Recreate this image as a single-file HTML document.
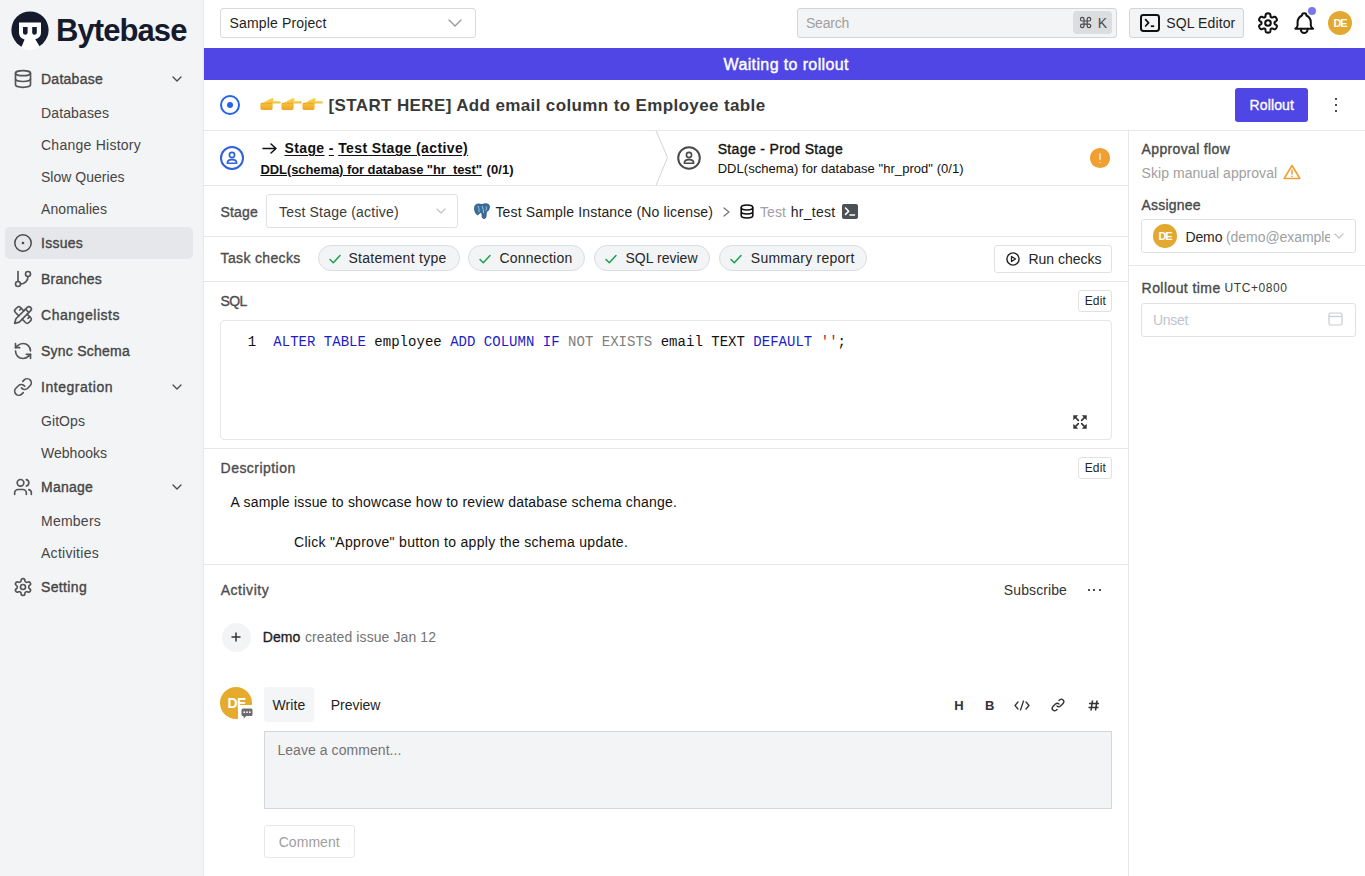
<!DOCTYPE html>
<html><head><meta charset="utf-8">
<style>
*{box-sizing:border-box;margin:0;padding:0}
html,body{width:1365px;height:876px;overflow:hidden;background:#fff}
body{font-family:"Liberation Sans",sans-serif;font-size:14px;color:#1f2937;position:relative}
.a{position:absolute;white-space:nowrap}
svg{display:block;overflow:visible}
</style></head>
<body>
<div class="a" style="left:0px;top:0px;width:204px;height:876px;background:#f3f4f6;border-right:1px solid #e5e7eb"></div>
<svg class="a" style="left:8px;top:8px;" width="44" height="44" viewBox="8 8 44 44"><circle cx="30" cy="30" r="18.6" fill="#151a2d"/>
<path d="M19 22.6H41V32.5Q41 37.6 35.3 39.3L40 47Q30.5 53 21.1 47.8L24.6 39.6Q19 37.8 19 32.5Z" fill="#fff"/>
<path d="M23 27H27.6V32.6Q27.6 34.8 25.3 34.8Q23 34.8 23 32.6Z" fill="#151a2d"/>
<path d="M32.2 27H36.8V32.6Q36.8 34.8 34.5 34.8Q32.2 34.8 32.2 32.6Z" fill="#151a2d"/></svg>
<div class="a" style="left:56.00px;top:14.76px;font-size:31px;line-height:31px;color:#151a2d;font-weight:bold;letter-spacing:-0.916px;">Bytebase</div>
<svg class="a" style="left:13px;top:69px;" width="20" height="20" viewBox="0 0 24 24"><g fill="none" stroke="#555" stroke-width="2" stroke-linecap="round" stroke-linejoin="round"><ellipse cx="12" cy="5" rx="9" ry="3"/><path d="M3 5V19A9 3 0 0 0 21 19V5"/><path d="M3 12A9 3 0 0 0 21 12"/></g></svg>
<div class="a" style="left:41.00px;top:72.15px;font-size:14px;line-height:14px;color:#454545;-webkit-text-stroke:0.35px #454545;letter-spacing:0.262px;">Database</div>
<svg class="a" style="left:172px;top:76px;" width="10" height="6" viewBox="0 0 10 6"><path d="M1 1l4 4 4-4" fill="none" stroke="#4a4a4a" stroke-width="1.3" stroke-linecap="round" stroke-linejoin="round"/></svg>
<div class="a" style="left:41.00px;top:106.15px;font-size:14px;line-height:14px;color:#454545;letter-spacing:0.122px;">Databases</div>
<div class="a" style="left:41.00px;top:138.15px;font-size:14px;line-height:14px;color:#454545;letter-spacing:0.253px;">Change History</div>
<div class="a" style="left:41.00px;top:170.15px;font-size:14px;line-height:14px;color:#454545;letter-spacing:0.022px;">Slow Queries</div>
<div class="a" style="left:41.00px;top:202.15px;font-size:14px;line-height:14px;color:#454545;letter-spacing:0.073px;">Anomalies</div>
<div class="a" style="left:5px;top:227px;width:188px;height:32px;background:#e5e7eb;border-radius:5px"></div>
<svg class="a" style="left:14px;top:234px;" width="18" height="18" viewBox="0 0 18 18"><circle cx="9" cy="9" r="8.2" fill="none" stroke="#4a4a4a" stroke-width="1.5"/><circle cx="9" cy="9" r="1.3" fill="#4a4a4a"/></svg>
<div class="a" style="left:41.00px;top:236.15px;font-size:14px;line-height:14px;color:#454545;-webkit-text-stroke:0.35px #454545;letter-spacing:0.258px;">Issues</div>
<svg class="a" style="left:13px;top:269px;" width="20" height="20" viewBox="0 0 24 24"><g fill="none" stroke="#555" stroke-width="2" stroke-linecap="round" stroke-linejoin="round"><line x1="6" x2="6" y1="3" y2="15"/><circle cx="18" cy="6" r="3"/><circle cx="6" cy="18" r="3"/><path d="M18 9a9 9 0 0 1-9 9"/></g></svg>
<div class="a" style="left:41.00px;top:272.15px;font-size:14px;line-height:14px;color:#454545;-webkit-text-stroke:0.35px #454545;letter-spacing:0.234px;">Branches</div>
<svg class="a" style="left:13px;top:305px;" width="20" height="20" viewBox="0 0 24 24"><g fill="none" stroke="#555" stroke-width="2" stroke-linecap="round" stroke-linejoin="round"><path d="m15 5 4 4"/><path d="M13 7 8.7 2.7a2.41 2.41 0 0 0-3.4 0L2.7 5.3a2.41 2.41 0 0 0 0 3.4L7 13"/><path d="m8 6 2-2"/><path d="m2 22 5.5-1.5L21.17 6.83a2.82 2.82 0 0 0-4-4L3.5 16.5Z"/><path d="m18 16 2-2"/><path d="m17 11 4.3 4.3c.94.94.94 2.46 0 3.4l-2.6 2.6c-.94.94-2.46.94-3.4 0L11 17"/></g></svg>
<div class="a" style="left:41.00px;top:308.15px;font-size:14px;line-height:14px;color:#454545;-webkit-text-stroke:0.35px #454545;letter-spacing:0.534px;">Changelists</div>
<svg class="a" style="left:13px;top:341px;" width="20" height="20" viewBox="0 0 24 24"><g fill="none" stroke="#555" stroke-width="2" stroke-linecap="round" stroke-linejoin="round"><path d="M21 12a9 9 0 0 0-9-9 9.75 9.75 0 0 0-6.74 2.74L3 8"/><path d="M3 3v5h5"/><path d="M3 12a9 9 0 0 0 9 9 9.75 9.75 0 0 0 6.74-2.74L21 16"/><path d="M16 16h5v5"/></g></svg>
<div class="a" style="left:41.00px;top:344.15px;font-size:14px;line-height:14px;color:#454545;-webkit-text-stroke:0.35px #454545;letter-spacing:0.240px;">Sync Schema</div>
<svg class="a" style="left:13px;top:377px;" width="20" height="20" viewBox="0 0 24 24"><g fill="none" stroke="#555" stroke-width="2" stroke-linecap="round" stroke-linejoin="round"><path d="M10 13a5 5 0 0 0 7.54.54l3-3a5 5 0 0 0-7.07-7.07l-1.72 1.71"/><path d="M14 11a5 5 0 0 0-7.54-.54l-3 3a5 5 0 0 0 7.07 7.07l1.71-1.71"/></g></svg>
<div class="a" style="left:41.00px;top:380.15px;font-size:14px;line-height:14px;color:#454545;-webkit-text-stroke:0.35px #454545;letter-spacing:0.534px;">Integration</div>
<svg class="a" style="left:172px;top:384px;" width="10" height="6" viewBox="0 0 10 6"><path d="M1 1l4 4 4-4" fill="none" stroke="#4a4a4a" stroke-width="1.3" stroke-linecap="round" stroke-linejoin="round"/></svg>
<div class="a" style="left:41.00px;top:414.15px;font-size:14px;line-height:14px;color:#454545;letter-spacing:0.073px;">GitOps</div>
<div class="a" style="left:41.00px;top:446.15px;font-size:14px;line-height:14px;color:#454545;letter-spacing:0.016px;">Webhooks</div>
<svg class="a" style="left:13px;top:477px;" width="20" height="20" viewBox="0 0 24 24"><g fill="none" stroke="#555" stroke-width="2" stroke-linecap="round" stroke-linejoin="round"><path d="M16 21v-2a4 4 0 0 0-4-4H6a4 4 0 0 0-4 4v2"/><circle cx="9" cy="7" r="4"/><path d="M22 21v-2a4 4 0 0 0-3-3.87"/><path d="M16 3.13a4 4 0 0 1 0 7.75"/></g></svg>
<div class="a" style="left:41.00px;top:480.15px;font-size:14px;line-height:14px;color:#454545;-webkit-text-stroke:0.35px #454545;letter-spacing:0.240px;">Manage</div>
<svg class="a" style="left:172px;top:484px;" width="10" height="6" viewBox="0 0 10 6"><path d="M1 1l4 4 4-4" fill="none" stroke="#4a4a4a" stroke-width="1.3" stroke-linecap="round" stroke-linejoin="round"/></svg>
<div class="a" style="left:41.00px;top:514.15px;font-size:14px;line-height:14px;color:#454545;letter-spacing:0.241px;">Members</div>
<div class="a" style="left:41.00px;top:546.15px;font-size:14px;line-height:14px;color:#454545;letter-spacing:0.277px;">Activities</div>
<svg class="a" style="left:13px;top:577px;" width="20" height="20" viewBox="0 0 24 24"><g fill="none" stroke="#555" stroke-width="2" stroke-linecap="round" stroke-linejoin="round"><path d="M12.22 2h-.44a2 2 0 0 0-2 2v.18a2 2 0 0 1-1 1.73l-.43.25a2 2 0 0 1-2 0l-.15-.08a2 2 0 0 0-2.73.73l-.22.38a2 2 0 0 0 .73 2.73l.15.1a2 2 0 0 1 1 1.72v.51a2 2 0 0 1-1 1.74l-.15.09a2 2 0 0 0-.73 2.73l.22.38a2 2 0 0 0 2.73.73l.15-.08a2 2 0 0 1 2 0l.43.25a2 2 0 0 1 1 1.73V20a2 2 0 0 0 2 2h.44a2 2 0 0 0 2-2v-.18a2 2 0 0 1 1-1.73l.43-.25a2 2 0 0 1 2 0l.15.08a2 2 0 0 0 2.73-.73l.22-.39a2 2 0 0 0-.73-2.73l-.15-.08a2 2 0 0 1-1-1.74v-.5a2 2 0 0 1 1-1.74l.15-.09a2 2 0 0 0 .73-2.73l-.22-.38a2 2 0 0 0-2.73-.73l-.15.08a2 2 0 0 1-2 0l-.43-.25a2 2 0 0 1-1-1.73V4a2 2 0 0 0-2-2z"/><circle cx="12" cy="12" r="3"/></g></svg>
<div class="a" style="left:41.00px;top:580.15px;font-size:14px;line-height:14px;color:#454545;-webkit-text-stroke:0.35px #454545;letter-spacing:0.346px;">Setting</div>
<div class="a" style="left:220px;top:8px;width:256px;height:30px;border:1px solid #d9d9d9;border-radius:3px;background:#fff"></div>
<div class="a" style="left:229.50px;top:15.85px;font-size:14px;line-height:14px;color:#1f1f1f;letter-spacing:0.150px;">Sample Project</div>
<svg class="a" style="left:448px;top:19px;" width="14" height="8" viewBox="0 0 14 8"><path d="M1 1l6 6 6-6" fill="none" stroke="#999" stroke-width="1.4" stroke-linecap="round" stroke-linejoin="round"/></svg>
<div class="a" style="left:797px;top:8px;width:320px;height:30px;border:1px solid #d4d4d8;border-radius:3px;background:#f3f4f6"></div>
<div class="a" style="left:806.00px;top:15.85px;font-size:14px;line-height:14px;color:#a0a0a0;letter-spacing:-0.224px;">Search</div>
<div class="a" style="left:1073px;top:11px;width:39px;height:23px;background:#dcdde0;border-radius:4px"></div>
<svg class="a" style="left:1080px;top:17px;" width="11.2" height="11.2" viewBox="0 0 12 12"><path d="M4.3 4.3V2.4A1.9 1.9 0 1 0 2.4 4.3H9.6A1.9 1.9 0 1 0 7.7 2.4V9.6A1.9 1.9 0 1 0 9.6 7.7H2.4A1.9 1.9 0 1 0 4.3 9.6Z" fill="none" stroke="#4b4b4b" stroke-width="1.3" stroke-linejoin="round"/></svg>
<div class="a" style="left:1097.80px;top:15.95px;font-size:14px;line-height:14px;color:#4b4b4b;">K</div>
<div class="a" style="left:1129px;top:8px;width:115px;height:30px;border:1px solid #d4d4d8;border-radius:3px;background:#f3f4f6"></div>
<svg class="a" style="left:1140px;top:14px;" width="20" height="18" viewBox="0 0 20 18"><rect x="1" y="1" width="18" height="16" rx="2.4" fill="none" stroke="#111" stroke-width="2"/><path d="M5.6 5.6l3 3.2-3 3.2" fill="none" stroke="#111" stroke-width="1.7" stroke-linecap="round" stroke-linejoin="round"/><path d="M10.8 12.2h3.4" fill="none" stroke="#111" stroke-width="1.8" stroke-linecap="butt"/></svg>
<div class="a" style="left:1166.30px;top:15.95px;font-size:14px;line-height:14px;color:#1f1f1f;letter-spacing:0.105px;">SQL Editor</div>
<svg class="a" style="left:1255px;top:10px;" width="26" height="26" viewBox="0 0 24 24"><g fill="none" stroke="#111" stroke-width="1.9" stroke-linejoin="round"><path d="M18.02 12.00 L18.03 12.16 L18.04 12.32 L18.08 12.48 L18.14 12.65 L18.25 12.82 L18.42 13.02 L18.70 13.24 L19.06 13.50 L19.47 13.79 L19.83 14.10 L20.07 14.39 L20.20 14.67 L20.25 14.92 L20.23 15.16 L20.18 15.39 L20.11 15.61 L20.02 15.83 L19.93 16.04 L19.82 16.25 L19.71 16.45 L19.59 16.65 L19.46 16.84 L19.33 17.03 L19.18 17.22 L19.03 17.39 L18.85 17.55 L18.65 17.68 L18.41 17.77 L18.11 17.80 L17.73 17.73 L17.29 17.57 L16.83 17.37 L16.42 17.18 L16.09 17.06 L15.84 17.00 L15.63 16.99 L15.45 17.02 L15.30 17.08 L15.15 17.14 L15.01 17.22 L14.88 17.30 L14.75 17.39 L14.62 17.50 L14.51 17.64 L14.41 17.82 L14.33 18.07 L14.27 18.42 L14.23 18.87 L14.18 19.36 L14.10 19.83 L13.97 20.19 L13.79 20.44 L13.59 20.60 L13.38 20.71 L13.16 20.78 L12.93 20.83 L12.70 20.86 L12.47 20.88 L12.23 20.90 L12.00 20.90 L11.77 20.90 L11.53 20.88 L11.30 20.86 L11.07 20.83 L10.84 20.78 L10.62 20.71 L10.41 20.60 L10.21 20.44 L10.03 20.19 L9.90 19.83 L9.82 19.36 L9.77 18.87 L9.73 18.42 L9.67 18.07 L9.59 17.82 L9.49 17.64 L9.38 17.50 L9.25 17.39 L9.12 17.30 L8.99 17.22 L8.85 17.14 L8.70 17.08 L8.55 17.02 L8.37 16.99 L8.16 17.00 L7.91 17.06 L7.58 17.18 L7.17 17.37 L6.71 17.57 L6.27 17.73 L5.89 17.80 L5.59 17.77 L5.35 17.68 L5.15 17.55 L4.97 17.39 L4.82 17.22 L4.67 17.03 L4.54 16.84 L4.41 16.65 L4.29 16.45 L4.18 16.25 L4.07 16.04 L3.98 15.83 L3.89 15.61 L3.82 15.39 L3.77 15.16 L3.75 14.92 L3.80 14.67 L3.93 14.39 L4.17 14.10 L4.53 13.79 L4.94 13.50 L5.30 13.24 L5.58 13.02 L5.75 12.82 L5.86 12.65 L5.92 12.48 L5.96 12.32 L5.97 12.16 L5.98 12.00 L5.97 11.84 L5.96 11.68 L5.92 11.52 L5.86 11.35 L5.75 11.18 L5.58 10.98 L5.30 10.76 L4.94 10.50 L4.53 10.21 L4.17 9.90 L3.93 9.61 L3.80 9.33 L3.75 9.08 L3.77 8.84 L3.82 8.61 L3.89 8.39 L3.98 8.17 L4.07 7.96 L4.18 7.75 L4.29 7.55 L4.41 7.35 L4.54 7.16 L4.67 6.97 L4.82 6.78 L4.97 6.61 L5.15 6.45 L5.35 6.32 L5.59 6.23 L5.89 6.20 L6.27 6.27 L6.71 6.43 L7.17 6.63 L7.58 6.82 L7.91 6.94 L8.16 7.00 L8.37 7.01 L8.55 6.98 L8.70 6.92 L8.85 6.86 L8.99 6.78 L9.12 6.70 L9.25 6.61 L9.38 6.50 L9.49 6.36 L9.59 6.18 L9.67 5.93 L9.73 5.58 L9.77 5.13 L9.82 4.64 L9.90 4.17 L10.03 3.81 L10.21 3.56 L10.41 3.40 L10.62 3.29 L10.84 3.22 L11.07 3.17 L11.30 3.14 L11.53 3.12 L11.77 3.10 L12.00 3.10 L12.23 3.10 L12.47 3.12 L12.70 3.14 L12.93 3.17 L13.16 3.22 L13.38 3.29 L13.59 3.40 L13.79 3.56 L13.97 3.81 L14.10 4.17 L14.18 4.64 L14.23 5.13 L14.27 5.58 L14.33 5.93 L14.41 6.18 L14.51 6.36 L14.62 6.50 L14.75 6.61 L14.88 6.70 L15.01 6.78 L15.15 6.86 L15.30 6.92 L15.45 6.98 L15.63 7.01 L15.84 7.00 L16.09 6.94 L16.42 6.82 L16.83 6.63 L17.29 6.43 L17.73 6.27 L18.11 6.20 L18.41 6.23 L18.65 6.32 L18.85 6.45 L19.03 6.61 L19.18 6.78 L19.33 6.97 L19.46 7.16 L19.59 7.35 L19.71 7.55 L19.82 7.75 L19.93 7.96 L20.02 8.17 L20.11 8.39 L20.18 8.61 L20.23 8.84 L20.25 9.08 L20.20 9.33 L20.07 9.61 L19.83 9.90 L19.47 10.21 L19.06 10.50 L18.70 10.76 L18.42 10.98 L18.25 11.18 L18.14 11.35 L18.08 11.52 L18.04 11.68 L18.03 11.84Z"/><circle cx="12" cy="12" r="2.6"/></g></svg>
<svg class="a" style="left:1290.8px;top:9.8px;" width="26.4" height="26.4" viewBox="0 0 24 24"><g fill="none" stroke="#111" stroke-width="1.85" stroke-linecap="round" stroke-linejoin="round"><path d="M10 5a2 2 0 1 1 4 0a7 7 0 0 1 4 6v3a4 4 0 0 0 2 3h-16a4 4 0 0 0 2 -3v-3a7 7 0 0 1 4 -6"/><path d="M9 17v1a3 3 0 0 0 6 0v-1"/></g></svg>
<div class="a" style="left:1308px;top:7px;width:8px;height:8px;background:#7878e8;border-radius:50%"></div>
<div class="a" style="left:1328px;top:11px;width:24px;height:24px;background:#e3a82f;border-radius:50%"></div>
<div class="a" style="left:1333.50px;top:17.69px;font-size:11px;line-height:11px;color:#fff;font-weight:bold;letter-spacing:-1.141px;">DE</div>
<div class="a" style="left:204px;top:48px;width:1161px;height:32px;background:#4f46e5"></div>
<div class="a" style="left:723.50px;top:56.76px;font-size:16px;line-height:16px;color:#fff;-webkit-text-stroke:0.40px #fff;letter-spacing:0.378px;">Waiting to rollout</div>
<svg class="a" style="left:220px;top:95px;" width="20" height="20" viewBox="0 0 20 20"><circle cx="10" cy="10" r="9" fill="none" stroke="#2563eb" stroke-width="2"/><circle cx="10" cy="10" r="3" fill="#2563eb"/></svg>
<svg class="a" style="left:260px;top:97px;" width="21" height="14" viewBox="0 0 21 14"><defs><linearGradient id="hg" x1="0" y1="0" x2="0" y2="1"><stop offset="0" stop-color="#fdd54e"/><stop offset="1" stop-color="#eda526"/></linearGradient></defs><path d="M3.5 5.6L11.6 1.2Q13.2 0.6 13.6 2Q13.8 3 12.8 4.2H19.6Q20.8 4.3 20.8 5.4Q20.8 6.5 19.6 6.6H12.6V11.2Q12.6 13.1 10.6 13.1H2.4Q0.4 13.1 0.4 11.2V7.6Q0.4 5.8 3.5 5.6Z" fill="url(#hg)"/><path d="M0.8 6.6H4.6M6 6.4H12.2" stroke="#d38c1c" stroke-width="0.6" fill="none" opacity="0.7"/></svg>
<svg class="a" style="left:281px;top:97px;" width="21" height="14" viewBox="0 0 21 14"><defs><linearGradient id="hg" x1="0" y1="0" x2="0" y2="1"><stop offset="0" stop-color="#fdd54e"/><stop offset="1" stop-color="#eda526"/></linearGradient></defs><path d="M3.5 5.6L11.6 1.2Q13.2 0.6 13.6 2Q13.8 3 12.8 4.2H19.6Q20.8 4.3 20.8 5.4Q20.8 6.5 19.6 6.6H12.6V11.2Q12.6 13.1 10.6 13.1H2.4Q0.4 13.1 0.4 11.2V7.6Q0.4 5.8 3.5 5.6Z" fill="url(#hg)"/><path d="M0.8 6.6H4.6M6 6.4H12.2" stroke="#d38c1c" stroke-width="0.6" fill="none" opacity="0.7"/></svg>
<svg class="a" style="left:302px;top:97px;" width="21" height="14" viewBox="0 0 21 14"><defs><linearGradient id="hg" x1="0" y1="0" x2="0" y2="1"><stop offset="0" stop-color="#fdd54e"/><stop offset="1" stop-color="#eda526"/></linearGradient></defs><path d="M3.5 5.6L11.6 1.2Q13.2 0.6 13.6 2Q13.8 3 12.8 4.2H19.6Q20.8 4.3 20.8 5.4Q20.8 6.5 19.6 6.6H12.6V11.2Q12.6 13.1 10.6 13.1H2.4Q0.4 13.1 0.4 11.2V7.6Q0.4 5.8 3.5 5.6Z" fill="url(#hg)"/><path d="M0.8 6.6H4.6M6 6.4H12.2" stroke="#d38c1c" stroke-width="0.6" fill="none" opacity="0.7"/></svg>
<div class="a" style="left:328.50px;top:96.51px;font-size:17px;line-height:17px;color:#383838;font-weight:bold;letter-spacing:0.375px;">[START HERE] Add email column to Employee table</div>
<div class="a" style="left:1235px;top:88px;width:73px;height:34px;background:#4f46e5;border-radius:3px"></div>
<div class="a" style="left:1249.50px;top:97.95px;font-size:14px;line-height:14px;color:#fff;-webkit-text-stroke:0.35px #fff;letter-spacing:0.134px;">Rollout</div>
<div class="a" style="left:1334.7px;top:97.7px;width:2.6px;height:2.6px;background:#111;border-radius:50%"></div>
<div class="a" style="left:1334.7px;top:103.7px;width:2.6px;height:2.6px;background:#111;border-radius:50%"></div>
<div class="a" style="left:1334.7px;top:109.7px;width:2.6px;height:2.6px;background:#111;border-radius:50%"></div>
<div class="a" style="left:204px;top:130px;width:1161px;height:1px;background:#e5e7eb"></div>
<svg class="a" style="left:220px;top:146px;" width="24" height="24" viewBox="0 0 24 24"><circle cx="12" cy="12" r="11" fill="none" stroke="#2f62d6" stroke-width="2"/><circle cx="12" cy="9" r="2.6" fill="none" stroke="#2f62d6" stroke-width="1.6"/><path d="M7.3 17.2Q7.3 13.6 12 13.6Q16.7 13.6 16.7 17.2Z" fill="none" stroke="#2f62d6" stroke-width="1.6" stroke-linejoin="round"/></svg>
<svg class="a" style="left:262px;top:143px;" width="15" height="11" viewBox="0 0 15 11"><path d="M1 5.5h13M9 1l5 4.5-5 4.5" fill="none" stroke="#111" stroke-width="1.5" stroke-linecap="round" stroke-linejoin="round"/></svg>
<div class="a" style="left:284.50px;top:141.15px;font-size:14px;line-height:14px;color:#111;font-weight:bold;letter-spacing:0.383px;text-underline-offset:1.5px"><u>Stage</u> <u>-</u> <u>Test Stage (active)</u></div>
<div class="a" style="left:260.40px;top:162.70px;font-size:13px;line-height:13px;color:#111;font-weight:bold;letter-spacing:-0.074px;text-decoration:underline;text-underline-offset:1px">DDL(schema) for database "hr_test"</div>
<div class="a" style="left:486.60px;top:162.70px;font-size:13px;line-height:13px;color:#111;font-weight:bold;letter-spacing:0.053px;">(0/1)</div>
<svg class="a" style="left:654px;top:130px;" width="16" height="56" viewBox="0 0 16 56"><path d="M2 0.5L13.5 27.5L2 55.5" fill="none" stroke="#d4d4d8" stroke-width="1"/></svg>
<svg class="a" style="left:677px;top:146px;" width="24" height="24" viewBox="0 0 24 24"><circle cx="12" cy="12" r="10.8" fill="none" stroke="#4b4b4b" stroke-width="2"/><circle cx="12" cy="9" r="2.6" fill="none" stroke="#4b4b4b" stroke-width="1.6"/><path d="M7.3 17.2Q7.3 13.6 12 13.6Q16.7 13.6 16.7 17.2Z" fill="none" stroke="#4b4b4b" stroke-width="1.6" stroke-linejoin="round"/></svg>
<div class="a" style="left:717.70px;top:142.25px;font-size:14px;line-height:14px;color:#111;-webkit-text-stroke:0.35px #111;letter-spacing:0.347px;">Stage - Prod Stage</div>
<div class="a" style="left:717.70px;top:161.90px;font-size:13px;line-height:13px;color:#111;letter-spacing:0.047px;">DDL(schema) for database "hr_prod" (0/1)</div>
<div class="a" style="left:1090.3px;top:148.3px;width:19.5px;height:19.5px;background:#f0a032;border-radius:50%"></div>
<div class="a" style="left:1099.2px;top:152.6px;width:1.6px;height:7px;background:#fcd9a0;border-radius:1px"></div>
<div class="a" style="left:1099.2px;top:161.6px;width:1.6px;height:1.6px;background:#fcd9a0;border-radius:50%"></div>
<div class="a" style="left:204px;top:185px;width:924px;height:1px;background:#e5e7eb"></div>
<div class="a" style="left:1128px;top:131px;width:1px;height:745px;background:#e5e7eb"></div>
<div class="a" style="left:1141.60px;top:142.15px;font-size:14px;line-height:14px;color:#4a4a4a;-webkit-text-stroke:0.35px #4a4a4a;letter-spacing:0.345px;">Approval flow</div>
<div class="a" style="left:1141.60px;top:165.75px;font-size:14px;line-height:14px;color:#a0a0a0;letter-spacing:0.046px;">Skip manual approval</div>
<svg class="a" style="left:1283px;top:164px;" width="18" height="16" viewBox="0 0 18 16"><path d="M9 1.5L1.2 14.5H16.8Z" fill="none" stroke="#f0a032" stroke-width="1.6" stroke-linejoin="round"/><path d="M9 6v4" stroke="#f0a032" stroke-width="1.5" stroke-linecap="round"/><circle cx="9" cy="12.3" r="0.9" fill="#f0a032"/></svg>
<div class="a" style="left:1141.60px;top:198.15px;font-size:14px;line-height:14px;color:#4a4a4a;-webkit-text-stroke:0.35px #4a4a4a;letter-spacing:0.178px;">Assignee</div>
<div class="a" style="left:1141px;top:219px;width:215px;height:34px;border:1px solid #e0e0e6;border-radius:3px;background:#fff"></div>
<div class="a" style="left:1153.2px;top:224.2px;width:23.6px;height:23.6px;background:#e3a82f;border-radius:50%"></div>
<div class="a" style="left:1158.50px;top:230.69px;font-size:11px;line-height:11px;color:#fff;font-weight:bold;letter-spacing:-1.141px;">DE</div>
<div class="a" style="left:1185.40px;top:229.85px;font-size:14px;line-height:14px;color:#262626;letter-spacing:-0.082px;">Demo</div>
<div class="a" style="left:1226px;top:228px;width:104px;height:18px;overflow:hidden"><div class="a" style="left:0.00px;top:1.85px;font-size:14px;line-height:14px;color:#a0a0a0;letter-spacing:-0.058px;">(demo@example.com)</div>
</div>
<svg class="a" style="left:1334px;top:233px;" width="10" height="6" viewBox="0 0 10 6"><path d="M1 1l4 4 4-4" fill="none" stroke="#c0c4cc" stroke-width="1.2" stroke-linecap="round" stroke-linejoin="round"/></svg>
<div class="a" style="left:1128px;top:265px;width:237px;height:1px;background:#e5e7eb"></div>
<div class="a" style="left:1141.60px;top:280.65px;font-size:14px;line-height:14px;color:#4a4a4a;-webkit-text-stroke:0.35px #4a4a4a;letter-spacing:0.426px;">Rollout time</div>
<div class="a" style="left:1224.50px;top:282.34px;font-size:12px;line-height:12px;color:#3a3a3a;letter-spacing:0.578px;">UTC+0800</div>
<div class="a" style="left:1141px;top:303px;width:215px;height:34px;border:1px solid #e0e0e6;border-radius:3px;background:#fff"></div>
<div class="a" style="left:1153.00px;top:313.15px;font-size:14px;line-height:14px;color:#c0c4cc;letter-spacing:-0.312px;">Unset</div>
<svg class="a" style="left:1328px;top:312px;" width="15" height="14" viewBox="0 0 15 14"><rect x="1" y="1" width="13" height="12" rx="1.5" fill="none" stroke="#c8cbd0" stroke-width="1.2"/><path d="M1 4.5h13" stroke="#c8cbd0" stroke-width="1.2"/></svg>
<div class="a" style="left:220.60px;top:204.55px;font-size:14px;line-height:14px;color:#4d4d4d;-webkit-text-stroke:0.35px #4d4d4d;letter-spacing:0.124px;">Stage</div>
<div class="a" style="left:266px;top:194px;width:192px;height:34px;border:1px solid #e0e0e6;border-radius:3px;background:#fff"></div>
<div class="a" style="left:279.00px;top:205.35px;font-size:14px;line-height:14px;color:#3a3a3a;letter-spacing:0.200px;">Test Stage (active)</div>
<svg class="a" style="left:436px;top:208px;" width="10" height="6" viewBox="0 0 10 6"><path d="M1 1l4 4 4-4" fill="none" stroke="#c0c4cc" stroke-width="1.2" stroke-linecap="round" stroke-linejoin="round"/></svg>
<svg class="a" style="left:474px;top:203px;" width="16" height="16" viewBox="0 0 16 16"><path d="M2.2 1.4Q0.3 2.4 0.5 6Q0.8 9.6 2.8 11.4Q3.8 12.1 4.6 11.2L6.1 9.6Q7.1 9.9 8 9.9L8.1 13.8Q8.4 15.6 10.2 15.6Q12 15.4 12 13.5L12.3 9.1Q15.6 7.6 15.5 3.6Q15.3 1 12.6 0.8Q10.4 0.4 8 1.6Q5 0.4 2.2 1.4Z" fill="#3a6f9c" stroke="#2b4d6e" stroke-width="0.8"/><path d="M4 3Q5.5 5 5 9M8.2 3Q9.5 6 9.6 10M12 3.5Q13 5 12 7.5" stroke="#9cc8ec" stroke-width="0.9" fill="none"/></svg>
<div class="a" style="left:495.40px;top:205.15px;font-size:14px;line-height:14px;color:#1f1f1f;letter-spacing:0.159px;">Test Sample Instance (No license)</div>
<svg class="a" style="left:723px;top:207px;" width="7" height="10" viewBox="0 0 7 10"><path d="M1 1l5 4-5 4" fill="none" stroke="#777" stroke-width="1.3" stroke-linecap="round" stroke-linejoin="round"/></svg>
<svg class="a" style="left:740px;top:204px;" width="14" height="15" viewBox="0 0 14 15"><g fill="none" stroke="#111" stroke-width="1.6"><ellipse cx="7" cy="3.5" rx="5.8" ry="2.5"/><path d="M1.2 3.5v8c0 1.4 2.6 2.5 5.8 2.5s5.8-1.1 5.8-2.5v-8M1.2 7.5c0 1.4 2.6 2.5 5.8 2.5s5.8-1.1 5.8-2.5"/></g></svg>
<div class="a" style="left:760.00px;top:205.15px;font-size:14px;line-height:14px;color:#a0a0a0;letter-spacing:0.082px;">Test</div>
<div class="a" style="left:790.80px;top:205.15px;font-size:14px;line-height:14px;color:#1f1f1f;letter-spacing:0.260px;">hr_test</div>
<svg class="a" style="left:842px;top:204px;" width="16" height="15" viewBox="0 0 16 15"><rect x="0" y="0" width="16" height="15" rx="2" fill="#4b4f56"/><path d="M3.5 4l3.2 3.2-3.2 3.2M8 11h4.5" fill="none" stroke="#fff" stroke-width="1.6" stroke-linecap="round" stroke-linejoin="round"/></svg>
<div class="a" style="left:204px;top:236px;width:924px;height:1px;background:#e5e7eb"></div>
<div class="a" style="left:220.60px;top:250.65px;font-size:14px;line-height:14px;color:#4d4d4d;-webkit-text-stroke:0.35px #4d4d4d;letter-spacing:0.342px;">Task checks</div>
<div class="a" style="left:318px;top:245px;width:142px;height:26px;border:1px solid #d9dce1;border-radius:13px;background:#f3f4f6"></div>
<svg class="a" style="left:329px;top:254px;" width="12" height="10" viewBox="0 0 12 10"><path d="M1 5.5l3.3 3.3L11 1.5" fill="none" stroke="#16a34a" stroke-width="1.5" stroke-linecap="round" stroke-linejoin="round"/></svg>
<div class="a" style="left:348.50px;top:251.05px;font-size:14px;line-height:14px;color:#262626;letter-spacing:0.276px;">Statement type</div>
<div class="a" style="left:468px;top:245px;width:117px;height:26px;border:1px solid #d9dce1;border-radius:13px;background:#f3f4f6"></div>
<svg class="a" style="left:479px;top:254px;" width="12" height="10" viewBox="0 0 12 10"><path d="M1 5.5l3.3 3.3L11 1.5" fill="none" stroke="#16a34a" stroke-width="1.5" stroke-linecap="round" stroke-linejoin="round"/></svg>
<div class="a" style="left:499.40px;top:251.05px;font-size:14px;line-height:14px;color:#262626;letter-spacing:0.220px;">Connection</div>
<div class="a" style="left:594px;top:245px;width:116px;height:26px;border:1px solid #d9dce1;border-radius:13px;background:#f3f4f6"></div>
<svg class="a" style="left:605px;top:254px;" width="12" height="10" viewBox="0 0 12 10"><path d="M1 5.5l3.3 3.3L11 1.5" fill="none" stroke="#16a34a" stroke-width="1.5" stroke-linecap="round" stroke-linejoin="round"/></svg>
<div class="a" style="left:625.50px;top:251.05px;font-size:14px;line-height:14px;color:#262626;letter-spacing:0.017px;">SQL review</div>
<div class="a" style="left:719px;top:245px;width:148px;height:26px;border:1px solid #d9dce1;border-radius:13px;background:#f3f4f6"></div>
<svg class="a" style="left:730px;top:254px;" width="12" height="10" viewBox="0 0 12 10"><path d="M1 5.5l3.3 3.3L11 1.5" fill="none" stroke="#16a34a" stroke-width="1.5" stroke-linecap="round" stroke-linejoin="round"/></svg>
<div class="a" style="left:750.80px;top:251.05px;font-size:14px;line-height:14px;color:#262626;letter-spacing:0.242px;">Summary report</div>
<div class="a" style="left:994px;top:245px;width:118px;height:28px;border:1px solid #e0e0e6;border-radius:3px;background:#fff"></div>
<svg class="a" style="left:1006px;top:252px;" width="14" height="14" viewBox="0 0 14 14"><circle cx="7" cy="7" r="6.1" fill="none" stroke="#222" stroke-width="1.4"/><path d="M5.5 4.5L9.5 7 5.5 9.5Z" fill="none" stroke="#222" stroke-width="1.3" stroke-linejoin="round"/></svg>
<div class="a" style="left:1028.40px;top:251.95px;font-size:14px;line-height:14px;color:#262626;letter-spacing:-0.013px;">Run checks</div>
<div class="a" style="left:204px;top:281px;width:924px;height:1px;background:#e5e7eb"></div>
<div class="a" style="left:220.60px;top:294.35px;font-size:14px;line-height:14px;color:#4d4d4d;-webkit-text-stroke:0.35px #4d4d4d;letter-spacing:-0.672px;">SQL</div>
<div class="a" style="left:1078px;top:290px;width:34px;height:22px;border:1px solid #e0e0e6;border-radius:3px;background:#fff"></div>
<div class="a" style="left:1084.70px;top:294.84px;font-size:12px;line-height:12px;color:#262626;letter-spacing:0.157px;">Edit</div>
<div class="a" style="left:220px;top:320px;width:892px;height:120px;border:1px solid #e5e7eb;border-radius:4px;background:#fff"></div>
<div class="a" style="left:247.80px;top:335.33px;font-size:14px;line-height:14px;color:#111;font-family:'Liberation Mono',monospace;">1</div>
<div class="a" style="left:273.30px;top:335.33px;font-size:14px;line-height:14px;color:#111;font-family:'Liberation Mono',monospace;letter-spacing:0.020px;"><span style="color:#1c1cc8">ALTER TABLE</span> employee <span style="color:#1c1cc8">ADD COLUMN IF</span> <span style="color:#808080">NOT EXISTS</span> email TEXT <span style="color:#1c1cc8">DEFAULT</span> <span style="color:#b71c1c">''</span>;</div>
<svg class="a" style="left:1073px;top:415px;" width="14" height="14" viewBox="0 0 14 14"><g fill="#333"><path d="M0.3 0.3H5.2L0.3 5.2Z"/><path d="M13.7 0.3H8.8L13.7 5.2Z"/><path d="M0.3 13.7H5.2L0.3 8.8Z"/><path d="M13.7 13.7H8.8L13.7 8.8Z"/></g><g stroke="#333" stroke-width="1.7" stroke-linecap="round"><path d="M2 2L5.3 5.3M12 2L8.7 5.3M2 12L5.3 8.7M12 12L8.7 8.7"/></g></svg>
<div class="a" style="left:204px;top:448px;width:924px;height:1px;background:#e5e7eb"></div>
<div class="a" style="left:220.60px;top:461.15px;font-size:14px;line-height:14px;color:#4d4d4d;-webkit-text-stroke:0.35px #4d4d4d;letter-spacing:0.455px;">Description</div>
<div class="a" style="left:1078px;top:457px;width:34px;height:22px;border:1px solid #e0e0e6;border-radius:3px;background:#fff"></div>
<div class="a" style="left:1084.70px;top:461.84px;font-size:12px;line-height:12px;color:#262626;letter-spacing:0.157px;">Edit</div>
<div class="a" style="left:230.60px;top:495.15px;font-size:14px;line-height:14px;color:#111;letter-spacing:0.204px;">A sample issue to showcase how to review database schema change.</div>
<div class="a" style="left:294.00px;top:535.45px;font-size:14px;line-height:14px;color:#111;letter-spacing:0.304px;">Click "Approve" button to apply the schema update.</div>
<div class="a" style="left:204px;top:564px;width:924px;height:1px;background:#e5e7eb"></div>
<div class="a" style="left:220.70px;top:583.15px;font-size:14px;line-height:14px;color:#4d4d4d;-webkit-text-stroke:0.35px #4d4d4d;letter-spacing:0.520px;">Activity</div>
<div class="a" style="left:1003.80px;top:583.15px;font-size:14px;line-height:14px;color:#333;letter-spacing:0.107px;">Subscribe</div>
<div class="a" style="left:1087.5px;top:589px;width:2px;height:2px;background:#111;border-radius:50%"></div>
<div class="a" style="left:1093px;top:589px;width:2px;height:2px;background:#111;border-radius:50%"></div>
<div class="a" style="left:1098.5px;top:589px;width:2px;height:2px;background:#111;border-radius:50%"></div>
<div class="a" style="left:222px;top:623px;width:29px;height:29px;background:#f3f4f6;border-radius:50%"></div>
<svg class="a" style="left:231px;top:632px;" width="10" height="10" viewBox="0 0 10 10"><path d="M5 0.5v9M0.5 5h9" stroke="#333" stroke-width="1.5"/></svg>
<div class="a" style="left:262.80px;top:630.05px;font-size:14px;line-height:14px;color:#1f1f1f;-webkit-text-stroke:0.35px #1f1f1f;letter-spacing:0.043px;">Demo</div>
<div class="a" style="left:305.00px;top:630.05px;font-size:14px;line-height:14px;color:#737373;letter-spacing:0.093px;">created issue Jan 12</div>
<div class="a" style="left:220px;top:687px;width:32px;height:32px;background:#e6ab2c;border-radius:50%"></div>
<div class="a" style="left:227.50px;top:695.95px;font-size:14px;line-height:14px;color:#fff;font-weight:bold;letter-spacing:-0.727px;">DE</div>
<div class="a" style="left:237.5px;top:704.5px;width:17px;height:16px;background:#fff;border-radius:2px"></div>
<svg class="a" style="left:241px;top:707.5px;" width="12" height="11" viewBox="0 0 12 11"><rect x="0.5" y="0.5" width="11" height="7.5" rx="1.5" fill="#6b6b6b"/><path d="M2.5 7.8L2.8 10.6L5.5 7.8Z" fill="#6b6b6b"/><circle cx="3.2" cy="4.2" r="0.9" fill="#fff"/><circle cx="6" cy="4.2" r="0.9" fill="#fff"/><circle cx="8.8" cy="4.2" r="0.9" fill="#fff"/></svg>
<div class="a" style="left:264px;top:687px;width:50px;height:35px;background:#f4f5f7;border-radius:3px"></div>
<div class="a" style="left:272.50px;top:697.95px;font-size:14px;line-height:14px;color:#1f1f1f;letter-spacing:0.119px;">Write</div>
<div class="a" style="left:330.70px;top:697.95px;font-size:14px;line-height:14px;color:#1f1f1f;letter-spacing:-0.012px;">Preview</div>
<div class="a" style="left:954.20px;top:698.80px;font-size:13px;line-height:13px;color:#333;font-weight:bold;">H</div>
<div class="a" style="left:985.00px;top:698.80px;font-size:13px;line-height:13px;color:#333;font-weight:bold;">B</div>
<svg class="a" style="left:1014px;top:700px;" width="16" height="11" viewBox="0 0 16 11"><path d="M4 2L1 5.5 4 9M12 2l3 3.5L12 9M9.5 1L6.5 10" fill="none" stroke="#333" stroke-width="1.3" stroke-linecap="round" stroke-linejoin="round"/></svg>
<svg class="a" style="left:1051px;top:698px;" width="14" height="14" viewBox="0 0 14 14"><g fill="none" stroke="#333" stroke-width="1.4" stroke-linecap="round"><path d="M6 8a2.5 2.5 0 0 0 3.5 0l2.8-2.8a2.5 2.5 0 0 0-3.5-3.5L8 2.5"/><path d="M8 6a2.5 2.5 0 0 0-3.5 0L1.7 8.8a2.5 2.5 0 0 0 3.5 3.5L6 11.5"/></g></svg>
<svg class="a" style="left:1088px;top:700px;" width="12" height="11" viewBox="0 0 12 11"><path d="M4.5 0.5L3 10.5M9 0.5L7.5 10.5M1 3.5h10M0.5 7.5h10" fill="none" stroke="#333" stroke-width="1.6"/></svg>
<div class="a" style="left:264px;top:731px;width:848px;height:78px;background:#f3f4f6;border:1px solid #d6d7da"></div>
<div class="a" style="left:277.40px;top:743.05px;font-size:14px;line-height:14px;color:#737373;letter-spacing:0.061px;">Leave a comment...</div>
<div class="a" style="left:264px;top:825px;width:91px;height:33px;border:1px solid #e5e7eb;border-radius:3px;background:#fff"></div>
<div class="a" style="left:278.70px;top:835.45px;font-size:14px;line-height:14px;color:#a0a0a0;letter-spacing:0.049px;">Comment</div>
</body></html>
